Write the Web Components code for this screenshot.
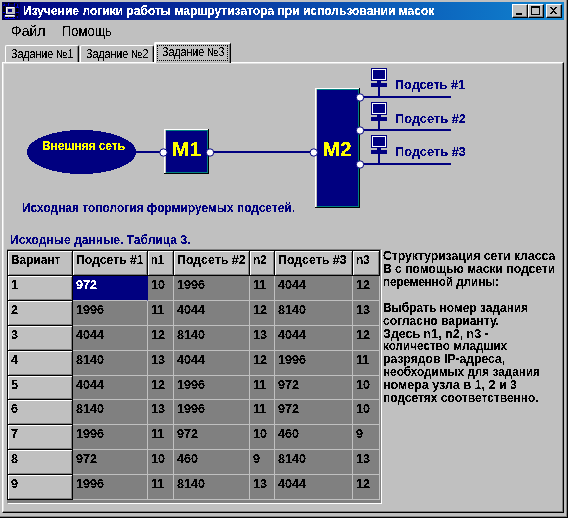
<!DOCTYPE html>
<html lang="ru"><head><meta charset="utf-8"><title>Изучение логики работы маршрутизатора</title>
<style>
html,body{margin:0;width:568px;height:518px;overflow:hidden;background:#c0c0c0;font-family:"Liberation Sans",Arial,sans-serif}
</style></head><body>
<app-window></app-window>
<script>
/* Filter that turns smoothed glyph edges into hard pixels */
const crisp=`<svg width="0" height="0" style="position:absolute"><filter id="crisp" x="-5%" y="-20%" width="110%" height="140%" color-interpolation-filters="sRGB"><feComponentTransfer><feFuncA type="discrete" tableValues="0 0 0 1 1 1 1"/></feComponentTransfer></filter></svg>`;
/* Text stretched horizontally to the width given by its "w" attribute */
customElements.define('fit-text', class extends HTMLElement{
  connectedCallback(){
    const r=this.attachShadow({mode:'open'});
    r.innerHTML=`<style>:host{display:block;white-space:nowrap;width:${this.getAttribute('w')}px}
      span{display:inline-block;transform-origin:0 50%}div{filter:url(#crisp)}</style>${crisp}<div><span><slot></slot></span></div>`;
    const s=r.querySelector('span');
    s.style.transform=`scaleX(${this.getAttribute('w')/s.offsetWidth})`;
  }
});
customElements.define('win-button', class extends HTMLElement{
  connectedCallback(){
    const g={min:'<path d="M4 9h6v2H4z"/>',
      max:'<path fill-rule="evenodd" d="M3 2h9v9H3zM4 4v6h7V4z"/>',
      close:'<path d="M4 3h2v1h1v1h1V4h1V3h2v1h-1v1H9v1H8v1h1v1h1v1h1v1H9V9H8V8H7v1H6v1H4V9h1V8h1V7h1V6H6V5H5V4H4z"/>'}[this.getAttribute('kind')];
    this.attachShadow({mode:'open'}).innerHTML=`<style>:host{display:block;box-sizing:border-box;width:16px;height:14px;background:#c0c0c0;
      border:1px solid;border-color:#fff #000 #000 #fff;box-shadow:inset -1px -1px #808080}
      svg{display:block;margin:-1px}</style><svg width="16" height="14" shape-rendering="crispEdges">${g}</svg>`;
  }
});
customElements.define('title-bar', class extends HTMLElement{
  connectedCallback(){
    this.attachShadow({mode:'open'}).innerHTML=`<style>
    :host{display:flex;height:18px;background:linear-gradient(90deg,#000080,#1084d0);align-items:center;color:#fff;font:bold 13px/18px "Liberation Sans",sans-serif}
    svg{display:block;width:18px;height:18px;margin-right:3px}
    .b{display:flex;margin-left:auto;padding-right:2px}.b :last-child{margin-left:2px}</style>
    <svg viewBox="0 0 18 18" shape-rendering="crispEdges"><path fill="#00004a" d="M0 0h18v18H0z"/>
    <path fill="#000" d="M3 1h3v1H3zM8 1h4v1H8zM13 2h2v2h-2zM1 4h2v9H1zM14 6h2v8h-2zM4 15h9v1H4z"/>
    <path fill="#0000e0" d="M2 2h1v2H2zM6 1h1v3H6zM12 1h1v3h-1zM15 2h1v3h-1zM1 3h2v1H1zM1 10h2v1H1zM14 5h3v1h-3zM14 10h3v1h-3zM2 13h1v3H2zM6 15h1v2H6zM11 15h1v2h-1zM15 14h1v2h-1zM3 16h10v1H3z"/>
    <path fill="#c0c0c0" d="M4 5h9v7H4z"/><path fill="#fff" d="M4 5h8v1H4zM4 5h1v6H4z"/><path fill="#000080" d="M6 7h4v3H6z"/>
    <path fill="#c0c0c0" d="M3 13h10v2H3z"/><path fill="#fff" d="M3 13h9v1H3z"/></svg>
    <fit-text w="411">Изучение логики работы маршрутизатора при использовании масок</fit-text>
    <div class="b"><win-button kind="min"></win-button><win-button kind="max"></win-button><win-button kind="close"></win-button></div>`;
  }
});
customElements.define('menu-bar', class extends HTMLElement{
  connectedCallback(){
    this.attachShadow({mode:'open'}).innerHTML=`<style>:host{display:flex;gap:17px;height:22px;padding-left:9px;font:14px/22px "Liberation Sans",sans-serif}</style>
    <fit-text w="34">Файл</fit-text><fit-text w="50">Помощь</fit-text>`;
  }
});
customElements.define('tab-item', class extends HTMLElement{
  connectedCallback(){
    this.attachShadow({mode:'open'}).innerHTML=`<style>
    :host{display:flex;box-sizing:border-box;width:74px;height:17px;border:1px solid;border-color:#fff #000 transparent #fff;border-bottom:0;
      border-radius:2px 2px 0 0;box-shadow:inset -1px 0 #808080;background:#c0c0c0;padding-left:5px;font:12px/16px "Liberation Sans",sans-serif}
    :host([active]){width:77px;height:21px;padding:1px 0 0 1px;margin-bottom:-1px;margin-left:-1px;border-width:2px 1px 0 2px;position:relative}
    :host([active]) .l{outline:1px dotted #000;outline-offset:-1px;height:16px;line-height:14px;padding:0 4px 0 5px}
    </style><div class="l"><fit-text w="62"><slot></slot></fit-text></div>`;
  }
});
customElements.define('topology-view', class extends HTMLElement{
  connectedCallback(){
    const box=(x,y,w,h)=>`<g shape-rendering="crispEdges"><path fill="#000" d="M${x} ${y}h${w}v${h}h-${w}z"/><path fill="#fff" d="M${x} ${y}h${w-1}v${h-1}h-${w-1}z"/>
      <path fill="#c0c0c0" d="M${x+1} ${y+1}h${w-2}v${h-2}h-${w-2}z"/><path fill="#008080" d="M${x+2} ${y+1}h${w-3}v${h-2}h-${w-3}z"/><path fill="#000080" d="M${x+2} ${y+2}h${w-4}v${h-4}h-${w-4}z"/></g>`;
    const port=(x,y)=>`<circle cx="${x}" cy="${y}" r="3.7" fill="#fff" stroke="#000080"/>`;
    const host=(y,line)=>`<g shape-rendering="crispEdges" fill="#000080"><path d="M371 ${y}h16v13h-16zM377 ${y+13}h4v2h-4zM371 ${y+15}h16v4h-16zM378 ${y+18}h2v${line-y-18}h-2z"/>
      <path fill="#fff" d="M372 ${y+1}h14v11h-14z"/><path d="M373 ${y+2}h12v9h-12z"/></g>`;
    this.attachShadow({mode:'open'}).innerHTML=`<style>:host{display:block;height:170px}svg{display:block}text{font:bold 12.8px "Liberation Sans",sans-serif;fill:#000080}
      .t{filter:url(#crisp)}text.y{fill:#ff0}text.m{font-size:19.5px}</style>${crisp}
    <svg width="560" height="170" viewBox="3 64 560 170">
    <g fill="#000080" shape-rendering="crispEdges"><ellipse cx="81.5" cy="152" rx="54.5" ry="22"/>
    <path d="M135 151h29v2h-29zM212 151h100v2H212zM363 96h88v2h-88zM363 129h88v2h-88zM363 163h88v2h-88z"/></g>
    ${box(164,129,45,45)}${box(315,88,45,120)}
    ${port(163.5,152.5)}${port(210,152.5)}${port(313.8,152.5)}${port(360,97.5)}${port(360,130.5)}${port(360,164.5)}
    ${host(68,97)}${host(102,130)}${host(135,164)}
    <g class="t"><text class="y" x="42" y="150" textLength="83" lengthAdjust="spacingAndGlyphs">Внешняя сеть</text>
    <text class="y m" x="172" y="156" textLength="29" lengthAdjust="spacingAndGlyphs">М1</text>
    <text class="y m" x="322.5" y="156" textLength="29" lengthAdjust="spacingAndGlyphs">М2</text>
    <text x="395" y="89" textLength="70" lengthAdjust="spacingAndGlyphs">Подсеть #1</text>
    <text x="395" y="123" textLength="71" lengthAdjust="spacingAndGlyphs">Подсеть #2</text>
    <text x="395" y="156" textLength="71" lengthAdjust="spacingAndGlyphs">Подсеть #3</text>
    <text x="22" y="212" textLength="273" lengthAdjust="spacingAndGlyphs">Исходная топология формируемых подсетей.</text></g>
    </svg>`;
  }
});
customElements.define('data-grid', class extends HTMLElement{
  connectedCallback(){
    const rows=[[972,10,1996,11,4044,12],[1996,11,4044,12,8140,13],[4044,12,8140,13,4044,12],[8140,13,4044,12,1996,11],[4044,12,1996,11,972,10],[8140,13,1996,11,972,10],[1996,11,972,10,460,9],[972,10,460,9,8140,13],[1996,11,8140,13,4044,12]];
    const heads=[['Вариант',49],['Подсеть #1',68],['n1',13],['Подсеть #2',69],['n2',14],['Подсеть #3',69],['n3',14]];
    this.attachShadow({mode:'open'}).innerHTML=`<style>
    :host{display:block;box-sizing:border-box;width:375px;height:255px;border:1px solid;border-color:#808080 #fff #fff #808080;background:#808080}
    .g{display:grid;grid-template-columns:65px 75px 26px 76px 25px 78px 27px;grid-template-rows:25px 25px 25px 25px 25px 24px 25px 25px 25px 25px;
      border-top:1px solid #000;border-left:1px solid #000;width:372px;margin-left:-1px;font:bold 12.6px/18px "Liberation Sans",sans-serif}
    .g>*{box-sizing:border-box;padding-left:3px;overflow:hidden;border-right:1px solid #c0c0c0;border-bottom:1px solid #c0c0c0}
    .g>.f{border-color:#000;background:#c0c0c0;box-shadow:inset 1px 1px #fff,inset -1px -1px #808080}
    .g>.s{background:#000080;color:#fff;border-right-color:#000080}
    .g span{display:block;filter:url(#crisp)}
    </style>${crisp}<div class="g">${heads.map(h=>`<div class="f"><fit-text w="${h[1]}">${h[0]}</fit-text></div>`).join('')}
    ${rows.map((r,i)=>`<div class="f"><span>${i+1}</span></div>`+r.map((v,j)=>`<div class="${i+j==0?'s':''}"><span>${v}</span></div>`).join('')).join('')}</div>`;
  }
});
customElements.define('task-note', class extends HTMLElement{
  connectedCallback(){
    const t=[['Структуризация сети класса',172],['В с помощью маски подсети',172],['переменной длины:',116],null,['Выбрать номер задания',145],['согласно варианту.',116],['Здесь n1, n2, n3 -',106],['количество младших',124],['разрядов IP-адреса,',122],['необходимых для задания',157],['номера узла в 1, 2 и 3',134],['подсетях соответственно.',156]];
    this.attachShadow({mode:'open'}).innerHTML=`<style>:host{display:block;padding-top:1px;font:bold 12.6px/12.92px "Liberation Sans",sans-serif}.e{height:12.92px}</style>
    ${t.map(a=>a?`<fit-text w="${a[1]}">${a[0]}</fit-text>`:'<div class="e"></div>').join('')}`;
  }
});
customElements.define('app-window', class extends HTMLElement{
  connectedCallback(){
    this.attachShadow({mode:'open'}).innerHTML=`<style>
    :host{display:flex;flex-direction:column;box-sizing:border-box;width:568px;height:518px;padding:2px 2px 2px 2px;background:#c0c0c0;border-right:1px solid #000;border-bottom:1px solid #000;box-shadow:inset -1px -1px #808080;color:#000}
    title-bar{width:562px;flex:none}
    .tabs{display:flex;align-items:flex-end;height:20px;padding-left:3px;gap:1px;flex:none}
    .page{box-sizing:border-box;width:562px;height:451px;flex:none;border:1px solid;border-color:#fff #000 #000 #fff;box-shadow:inset -1px -1px #808080,inset 1px 1px #dfdfdf;padding:1px 0 0 0}
    .cap{height:15px;padding-left:7px;color:#000080;font:bold 12.8px/12px "Liberation Sans",sans-serif}
    .row{display:flex;padding-left:4px;gap:1px}</style>
    <title-bar></title-bar><menu-bar></menu-bar>
    <div class="tabs"><tab-item>Задание №1</tab-item><tab-item>Задание №2</tab-item><tab-item active>Задание №3</tab-item></div>
    <div class="page"><topology-view></topology-view><div class="cap"><fit-text w="180">Исходные данные. Таблица 3.</fit-text></div>
    <div class="row"><data-grid></data-grid><task-note></task-note></div></div>`;
  }
});
</script></body></html>
